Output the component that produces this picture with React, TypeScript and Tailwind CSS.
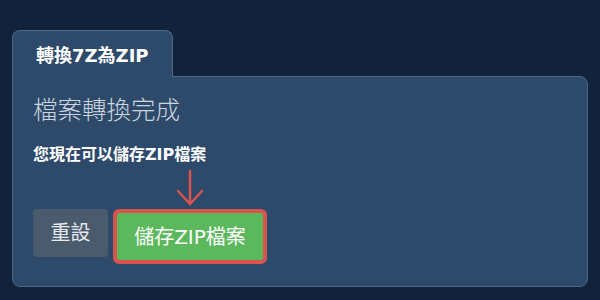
import React from 'react';

const font = { fontFamily: '"DejaVu Sans", "Noto Sans CJK TC", sans-serif' };

function DownArrow() {
  return (
    <svg className="absolute left-[63px] -top-[40px] w-[28px] h-[38px]" viewBox="0 0 28 38" fill="none" stroke="#d9534f" strokeWidth={2.5} strokeLinecap="round" strokeLinejoin="round">
      <path d="M14 2v33" />
      <path d="M2 22l12 13 12-13" />
    </svg>
  );
}

export default function App() {
  return (
    <div className="min-h-screen bg-[#11223a] pt-[30px] px-[12px]" style={font}>
      {/* Tab */}
      <div className="relative z-10 -mb-px flex h-[47px] w-[161px] items-center rounded-t-lg border border-b-0 border-[#4b6789] bg-[#2d4a6b] pl-[23px] pt-[2px] text-[18px] font-bold text-white">
        轉換7Z為ZIP
      </div>

      {/* Panel */}
      <div className="h-[211px] w-[576px] rounded-lg rounded-tl-none border border-[#4b6789] bg-[#2d4a6b] px-[20px] pt-[18px]">
        <h2 className="text-[24.5px] font-light leading-[32px] text-[#cdd5de]">檔案轉換完成</h2>
        <p className="mt-[18px] text-[16px] font-bold leading-[20px] text-white">您現在可以儲存ZIP檔案</p>

        <div className="mt-[44px] flex items-start gap-[5px]">
          <button className="h-[48px] w-[75px] rounded bg-[#4a5b6d] text-[20px] text-[#e6eaee]">重設</button>
          <div className="relative">
            <DownArrow />
            <button className="h-[55px] w-[154px] rounded-md border-4 border-[#d9534f] bg-[#5cb85c] text-[20px] text-white">
              儲存ZIP檔案
            </button>
          </div>
        </div>
      </div>
    </div>
  );
}
